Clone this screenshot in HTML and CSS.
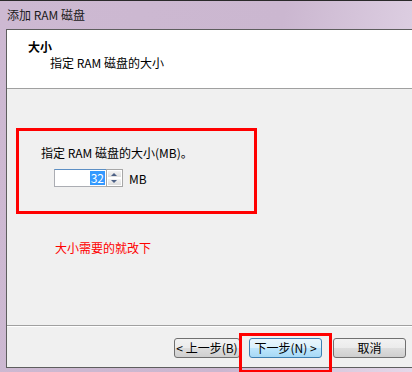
FILE: index.html
```
<!DOCTYPE html>
<html lang="zh-CN">
<head>
    <meta charset="UTF-8">
    <meta name="viewport" content="width=device-width, initial-scale=1.0">
    <title>添加 RAM 磁盘</title>
    <link rel="stylesheet" href="styles.css">
</head>
<body>

    <div class="ventana">
        <!-- Barra de título -->
        <div class="titulo">添加 RAM 磁盘</div>

        <div class="marco">
            <div class="cliente">
                <!-- Encabezado del asistente -->
                <div class="cabecera">
                    <p class="cab-titulo">大小</p>
                    <p class="cab-sub">指定 RAM 磁盘的大小</p>
                </div>

                <!-- Contenido -->
                <div class="contenido">
                    <div class="caja-roja">
                        <p class="etiqueta">指定 RAM 磁盘的大小(MB)。</p>
                        <div class="fila-spin">
                            <div class="spin">
                                <div class="campo"><span class="sel">32</span></div>
                                <div class="flechas">
                                    <span class="flecha arriba"></span>
                                    <span class="flecha abajo"></span>
                                </div>
                            </div>
                            <span class="unidad">MB</span>
                        </div>
                    </div>
                    <p class="nota">大小需要的就改下</p>
                </div>

                <!-- Botones -->
                <div class="pie">
                    <button class="boton atras">&lt; 上一步(B)</button>
                    <button class="boton siguiente">下一步(N) &gt;</button>
                    <button class="boton cancelar">取消</button>
                </div>
            </div>
        </div>
    </div>

</body>
</html>
```

FILE: styles.css
```
body {
    margin: 0;
    padding: 0;
    font-family: "Noto Sans CJK SC", "DejaVu Sans", sans-serif;
    font-size: 12px;
    background-color: #d9c6dd;
}

.ventana {
    width: 412px;
    height: 372px;
    background: linear-gradient(100deg, #cdb9d2 0%, #cbb7d0 60%, #e4d8e9 100%);
    overflow: hidden;
}

.titulo {
    height: 28px;
    border-top: 1px solid #2a2a2a;
    line-height: 27px;
    padding-left: 7px;
    color: #1a1a1a;
    font-size: 12px;
}

.marco {
    padding-left: 6px;
}

.cliente {
    height: 337px;
    background-color: #f0f0f0;
    border-left: 1px solid #5e5e5e;
    border-top: 1px solid #5e5e5e;
    border-bottom: 1px solid #5e5e5e;
    display: flex;
    flex-direction: column;
}

.cabecera {
    height: 59px;
    background-color: #fff;
    border-bottom: 1px solid #a0a0a0;
    box-sizing: border-box;
    padding: 9px 0 0 21px;
}

.cabecera p {
    margin: 0;
    line-height: 16px;
}

.cab-titulo {
    font-weight: bold;
}

.cab-sub {
    padding-left: 22px;
}

.contenido {
    flex: 1;
    padding: 39px 0 0 9px;
    border-bottom: 1px solid #a0a0a0;
    box-shadow: 0 1px 0 #fff;
}

.caja-roja {
    border: 3px solid #ff0000;
    padding: 14px 0 0 22px;
    width: 213px;
    height: 66px;
}

.etiqueta {
    margin: 0;
    line-height: 16px;
}

.fila-spin {
    display: flex;
    align-items: center;
    margin-top: 8px;
    margin-left: 13px;
}

.spin {
    display: flex;
    height: 18px;
}

.campo {
    width: 50px;
    height: 16px;
    background-color: #fff;
    border: 1px solid #abadb3;
    border-top-color: #5c8fc4;
    border-right: none;
    display: flex;
    justify-content: flex-end;
    align-items: center;
    padding-right: 1px;
}

.sel {
    background-color: #3399ff;
    color: #fff;
    line-height: 14px;
    padding: 0 1px;
}

.flechas {
    width: 15px;
    border: 1px solid #a7a7a7;
    display: flex;
    flex-direction: column;
    background: #eaeaea;
}

.flecha {
    flex: 1;
    position: relative;
    background: linear-gradient(#f4f4f4, #dedede);
    border: 1px solid #fff;
}

.flecha::after {
    content: "";
    position: absolute;
    left: 3px;
    top: 2px;
    border-left: 3px solid transparent;
    border-right: 3px solid transparent;
}

.arriba::after {
    border-bottom: 3px solid #4d6185;
}

.abajo::after {
    top: 1px;
    border-top: 3px solid #4d6185;
}

.unidad {
    margin-left: 6px;
}

.nota {
    margin: 26px 0 0 39px;
    color: #ff0000;
    line-height: 16px;
}

.pie {
    display: flex;
    padding: 12px 6px 0 0;
    justify-content: flex-end;
    height: 29px;
}

.boton {
    height: 20px;
    font-family: "Noto Sans CJK SC", "DejaVu Sans", sans-serif;
    font-size: 12px;
    padding: 0;
    border: 1px solid #707070;
    border-radius: 3px;
    background: linear-gradient(#f2f2f2 0%, #ebebeb 50%, #dddddd 51%, #cfcfcf 100%);
    color: #000;
    line-height: 16px;
}

.atras {
    width: 66px;
}

.siguiente {
    width: 73px;
    margin-left: 9px;
    border-color: #3c7fb1;
    background: linear-gradient(#eaf6fd 0%, #d9f0fc 50%, #bee6fd 51%, #a7d9f5 100%);
    position: relative;
}

/* marca roja sobre el botón */
.siguiente::after {
    content: "";
    position: absolute;
    left: -11px;
    right: -11px;
    top: -6px;
    bottom: -16px;
    border: 3px solid #ff0000;
}

.cancelar {
    width: 73px;
    margin-left: 11px;
}
```
